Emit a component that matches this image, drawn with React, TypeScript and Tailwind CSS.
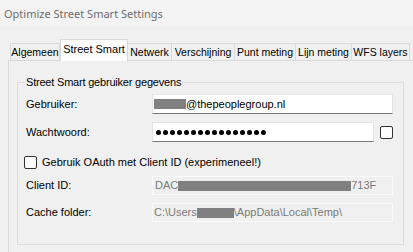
const tabs = [
  { label: "Algemeen", w: "w-[50px]" },
  { label: "Street Smart", w: "w-[68px]", active: true },
  { label: "Netwerk", w: "w-[44px]" },
  { label: "Verschijning", w: "w-[63px]" },
  { label: "Punt meting", w: "w-[61px]" },
  { label: "Lijn meting", w: "w-[56px]" },
  { label: "WFS layers", w: "w-[58px]" },
];

function Redacted({ className }: { className: string }) {
  return <span className={`inline-block h-[10px] bg-[#808080] ${className}`} />;
}

function Box({ className = "" }: { className?: string }) {
  return (
    <span
      className={`inline-block h-[13px] w-[13px] shrink-0 rounded-[2px] border border-[#333333] bg-[#fdfdfd] ${className}`}
    />
  );
}

function Row({ label, children }: { label: string; children: React.ReactNode }) {
  return (
    <div className="flex items-center">
      <div className="w-[126px] shrink-0">{label}</div>
      {children}
    </div>
  );
}

export default function App() {
  return (
    <div
      className="h-[252px] w-[413px] overflow-hidden bg-[#f0f0f0] text-[11px] leading-[13px] text-black"
      style={{ fontFamily: '"Liberation Sans", Arial, sans-serif' }}
    >
      <div
        className="flex h-[27px] items-center bg-[#f3f3f3] pl-[4px] text-[11px] text-[#6d6d6d]"
        style={{ fontFamily: '"Noto Sans", "Open Sans", sans-serif' }}
      >
        Optimize Street Smart Settings
      </div>

      {/* tabs */}
      <div className="mt-[12px] flex h-[21px] items-end pl-[10px] text-[10.5px]">
        {tabs.map((t) =>
          t.active ? (
            <div
              key={t.label}
              className={`${t.w} relative z-10 mb-[-1px] flex h-[22px] shrink-0 items-center justify-center border border-b-0 border-[#d9d9d9] bg-white pb-[2px] text-[11px]`}
            >
              {t.label}
            </div>
          ) : (
            <div
              key={t.label}
              className={`${t.w} flex h-[17px] shrink-0 items-center justify-center border border-b-0 border-l-0 border-[#d9d9d9] bg-[#f0f0f0] first:border-l`}
            >
              {t.label}
            </div>
          )
        )}
      </div>

      {/* panel */}
      <div className="ml-[8px] h-[200px] border-l border-t border-[#d9d9d9] bg-[#f0f0f0] pt-[15px]">
        <fieldset className="ml-[8px] h-[169px] w-[387px] border border-[#dcdcdc] px-[8px]">
          <legend className="ml-[-1px] px-[1px] tracking-[-0.2px]">Street Smart gebruiker gegevens</legend>

          <div className="mt-[5px] flex flex-col">
            <Row label="Gebruiker:">
              <div className="flex h-[20px] w-[241px] items-center border border-[#e3e3e3] border-b-[#7a7a7a] bg-white pl-[1px]">
                <Redacted className="w-[32px]" />
                <span>@thepeoplegroup.nl</span>
              </div>
            </Row>

            <div className="mt-[8px]">
              <Row label="Wachtwoord:">
                <div className="flex h-[20px] w-[222px] items-center gap-[2px] border border-[#e3e3e3] border-b-[#7a7a7a] bg-white pl-[3px]">
                  {Array.from({ length: 16 }).map((_, i) => (
                    <span key={i} className="h-[5px] w-[5px] rounded-full bg-black" />
                  ))}
                </div>
                <Box className="ml-[6px]" />
              </Row>
            </div>

            <div className="ml-[-2px] mt-[14px] flex items-center">
              <Box />
              <span className="ml-[5px]">Gebruik OAuth met Client ID (experimeneel!)</span>
            </div>

            <div className="mt-[7px]">
              <Row label="Client ID:">
                <div className="flex h-[19px] w-[241px] items-center border border-[#fbfbfb] bg-[#f0f0f0] pl-[2px] text-[#7a7a7a]">
                  <span>DAC</span>
                  <Redacted className="w-[173px]" />
                  <span>713F</span>
                </div>
              </Row>
            </div>

            <div className="mt-[8px]">
              <Row label="Cache folder:">
                <div className="flex h-[19px] w-[241px] items-center border border-[#fbfbfb] bg-[#f0f0f0] pl-[1px] text-[#7a7a7a]">
                  <span>C:\Users</span>
                  <Redacted className="w-[37px]" />
                  <span>\AppData\Local\Temp\</span>
                </div>
              </Row>
            </div>
          </div>
        </fieldset>
      </div>
    </div>
  );
}
